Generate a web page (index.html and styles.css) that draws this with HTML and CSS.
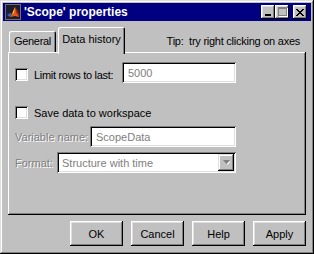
FILE: index.html
```html
<!DOCTYPE html>
<html lang="en">

<head>
    <meta charset="UTF-8">
    <title>'Scope' properties</title>
    <link rel="stylesheet" href="styles.css">
</head>

<body>
    <div class="window">
        <div class="titlebar">
            <svg class="app-icon" width="16" height="16" viewBox="0 0 16 16">
                <rect x="0" y="0" width="16" height="16" fill="#1c1c2c"/>
                <rect x="0.5" y="0.5" width="15" height="15" fill="none" stroke="#707070"/>
                <polygon points="2,11 5,9 7,10 5,13" fill="#3b5fc0"/>
                <polygon points="5,13 7,10 10,3 13,8 14,13 10,12" fill="#e05a14"/>
                <polygon points="7,10 10,3 9,9" fill="#f8c838"/>
                <polygon points="10,3 13,8 14,13 11,8" fill="#a81a0c"/>
            </svg>
            <span class="title">'Scope' properties</span>
            <div class="title-buttons">
                <button class="tbtn tbtn-min"><span class="glyph-min"></span></button>
                <button class="tbtn tbtn-max"><span class="glyph-max"></span></button>
                <button class="tbtn tbtn-close">
                    <svg width="8" height="7" viewBox="0 0 8 7">
                        <path d="M0 0h2v1h1v1h2v-1h1v-1h2v1h-1v1h-1v1h-1v1h1v1h1v1h1v1h-2v-1h-1v-1h-2v1h-1v1h-2v-1h1v-1h1v-1h1v-1h-1v-1h-1v-1h-1z" fill="#000"/>
                    </svg>
                </button>
            </div>
        </div>

        <div class="content">
            <div class="tabstrip">
                <div class="tab">General</div>
                <div class="tab tab-active">Data history</div>
                <div class="tip">Tip:&nbsp; try right clicking on axes</div>
            </div>

            <div class="panel">
                <div class="row row-limit">
                    <label class="check"><span class="box"></span><span class="narrow">Limit rows to last:</span></label>
                    <div class="field field-limit">5000</div>
                </div>
                <div class="row row-save">
                    <label class="check"><span class="box"></span>Save data to workspace</label>
                </div>
                <div class="row row-var">
                    <span class="label-off">Variable name:</span>
                    <div class="field field-var">ScopeData</div>
                </div>
                <div class="row row-format">
                    <span class="label-off">Format:</span>
                    <div class="field field-format">
                        <span class="select-text">Structure with time</span>
                        <span class="drop-btn">
                            <svg width="7" height="5" viewBox="0 0 7 5">
                                <polygon points="0,0 7,0 3.5,4" fill="#808080"/>
                                <path d="M4 4h1v-1h1v-1h1" stroke="#fff" fill="none"/>
                            </svg>
                        </span>
                    </div>
                </div>
            </div>

            <div class="actions">
                <button class="btn">OK</button>
                <button class="btn">Cancel</button>
                <button class="btn">Help</button>
                <button class="btn">Apply</button>
            </div>
        </div>
    </div>
</body>

</html>
```

FILE: styles.css
```css
body {
    margin: 0;
    background-color: #c0c0c0;
    font-family: "Liberation Sans", Arial, sans-serif;
    font-size: 11px;
    color: #000;
}

.window {
    width: 314px;
    height: 254px;
    box-sizing: border-box;
    padding: 3px;
    background-color: #c0c0c0;
    box-shadow: inset -1px -1px #000, inset 1px 1px #dfdfdf, inset -2px -2px #808080, inset 2px 2px #fff;
    display: flex;
    flex-direction: column;
}

/* title bar */
.titlebar {
    height: 18px;
    background-color: #000080;
    display: flex;
    align-items: center;
    padding-left: 2px;
    padding-right: 4px;
}

.app-icon {
    flex: none;
}

.title {
    margin-left: 3px;
    color: #fff;
    font-weight: bold;
    font-size: 12px;
}

.title-buttons {
    margin-left: auto;
    display: flex;
}

.tbtn {
    width: 14px;
    height: 14px;
    padding: 0;
    border: none;
    background-color: #c0c0c0;
    box-shadow: inset -1px -1px #000, inset 1px 1px #fff, inset -2px -2px #808080, inset 2px 2px #dfdfdf;
    display: flex;
    align-items: center;
    justify-content: center;
}

.tbtn-close {
    margin-left: 4px;
}

.glyph-min {
    width: 6px;
    height: 2px;
    background-color: #000;
    margin-top: 6px;
    margin-right: 1px;
}

.glyph-max {
    width: 7px;
    height: 6px;
    border: 1px solid #808080;
    border-top-width: 2px;
    box-shadow: 1px 1px #fff;
    margin-bottom: 1px;
}

/* tabs */
.content {
    flex: 1;
    display: flex;
    flex-direction: column;
    padding: 6px 5px 0 5px;
}

.tabstrip {
    height: 25px;
    display: flex;
    align-items: flex-end;
}

.tab {
    height: 21px;
    box-sizing: border-box;
    display: flex;
    align-items: center;
    justify-content: center;
    background-color: #c0c0c0;
    border-radius: 2px 2px 0 0;
    box-shadow: inset 1px 1px #fff, inset -1px 0 #000, inset -2px 0 #808080;
    padding-bottom: 2px;
}

.tab:first-child {
    width: 47px;
    margin-left: 1px;
    letter-spacing: -0.3px;
}

.tab-active {
    width: 67px;
    height: 27px;
    margin-left: 2px;
    margin-bottom: -2px;
    padding-bottom: 4px;
    position: relative;
    z-index: 1;
}

.tip {
    margin-left: auto;
    margin-right: 6px;
    align-self: center;
    padding-top: 2px;
    letter-spacing: -0.25px;
}

/* tab panel */
.panel {
    height: 163px;
    box-sizing: border-box;
    padding: 10px 70px 0 7px;
    box-shadow: inset -1px -1px #000, inset 1px 1px #fff, inset -2px -2px #808080;
}

.row {
    display: flex;
    align-items: center;
}

.row-limit {
    align-items: flex-start;
}

.row-limit .check {
    margin-top: 6px;
}

.narrow {
    letter-spacing: -0.3px;
}

.row-save {
    margin-top: 23px;
}

.row-var {
    margin-top: 7px;
}

.row-format {
    margin-top: 5px;
}

.check {
    display: flex;
    align-items: center;
    height: 13px;
}

.box {
    width: 13px;
    height: 13px;
    margin-right: 6px;
    background-color: #fff;
    box-shadow: inset 1px 1px #808080, inset -1px -1px #fff, inset 2px 2px #000, inset -2px -2px #dfdfdf;
}

.label-off {
    color: #808080;
    text-shadow: 1px 1px #fff;
}

.field {
    margin-left: auto;
    height: 21px;
    box-sizing: border-box;
    padding: 0 6px;
    display: flex;
    align-items: center;
    background-color: #fff;
    color: #808080;
    box-shadow: inset 1px 1px #808080, inset -1px -1px #fff, inset 2px 2px #000, inset -2px -2px #dfdfdf;
}

.field-limit {
    width: 114px;
}

.field-var {
    width: 146px;
}

.field-format {
    width: 179px;
    padding: 2px 2px 2px 5px;
}

.select-text {
    flex: 1;
}

.drop-btn {
    width: 16px;
    height: 17px;
    display: flex;
    align-items: center;
    justify-content: center;
    background-color: #c0c0c0;
    box-shadow: inset -1px -1px #000, inset 1px 1px #dfdfdf, inset -2px -2px #808080, inset 2px 2px #fff;
}

/* dialog buttons */
.actions {
    margin-top: 6px;
    display: flex;
    justify-content: flex-end;
    gap: 8px;
}

.btn {
    width: 53px;
    height: 25px;
    padding: 0;
    border: none;
    font-family: inherit;
    font-size: 11px;
    color: #000;
    background-color: #c0c0c0;
    box-shadow: inset -1px -1px #000, inset 1px 1px #fff, inset -2px -2px #808080, inset 2px 2px #dfdfdf;
}
```
